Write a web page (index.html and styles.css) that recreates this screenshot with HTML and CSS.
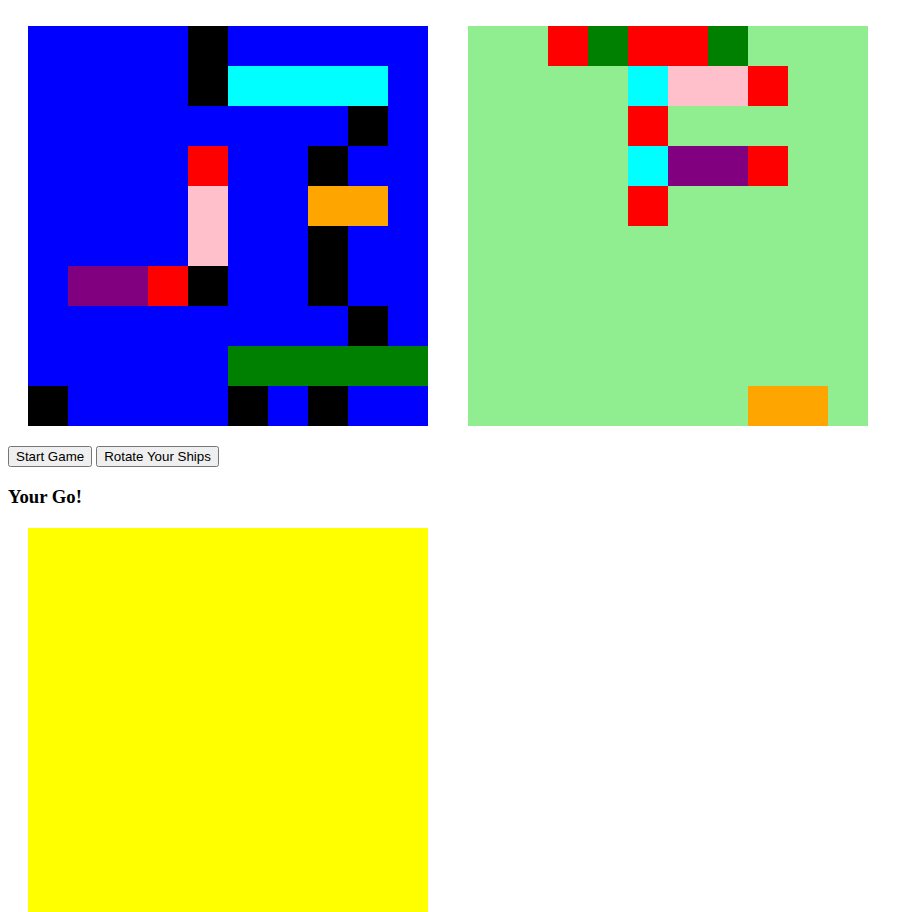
FILE: index.html
```html
<!DOCTYPE html>
<html>
<head>
<meta charset="utf-8">
<title>Battleships</title>
<link rel="stylesheet" href="styles.css">
</head>
<body>
<div class="boards">
  <div class="grid grid-user">
    <div></div><div></div><div></div><div></div><div class="k"></div><div></div><div></div><div></div><div></div><div></div>
    <div></div><div></div><div></div><div></div><div class="k"></div><div class="cy"></div><div class="cy"></div><div class="cy"></div><div class="cy"></div><div></div>
    <div></div><div></div><div></div><div></div><div></div><div></div><div></div><div></div><div class="k"></div><div></div>
    <div></div><div></div><div></div><div></div><div class="r"></div><div></div><div></div><div class="k"></div><div></div><div></div>
    <div></div><div></div><div></div><div></div><div class="p"></div><div></div><div></div><div class="o"></div><div class="o"></div><div></div>
    <div></div><div></div><div></div><div></div><div class="p"></div><div></div><div></div><div class="k"></div><div></div><div></div>
    <div></div><div class="pu"></div><div class="pu"></div><div class="r"></div><div class="k"></div><div></div><div></div><div class="k"></div><div></div><div></div>
    <div></div><div></div><div></div><div></div><div></div><div></div><div></div><div></div><div class="k"></div><div></div>
    <div></div><div></div><div></div><div></div><div></div><div class="g"></div><div class="g"></div><div class="g"></div><div class="g"></div><div class="g"></div>
    <div class="k"></div><div></div><div></div><div></div><div></div><div class="k"></div><div></div><div class="k"></div><div></div><div></div>
  </div>
  <div class="grid grid-computer">
    <div></div><div></div><div class="r"></div><div class="g"></div><div class="r"></div><div class="r"></div><div class="g"></div><div></div><div></div><div></div>
    <div></div><div></div><div></div><div></div><div class="cy"></div><div class="p"></div><div class="p"></div><div class="r"></div><div></div><div></div>
    <div></div><div></div><div></div><div></div><div class="r"></div><div></div><div></div><div></div><div></div><div></div>
    <div></div><div></div><div></div><div></div><div class="cy"></div><div class="pu"></div><div class="pu"></div><div class="r"></div><div></div><div></div>
    <div></div><div></div><div></div><div></div><div class="r"></div><div></div><div></div><div></div><div></div><div></div>
    <div></div><div></div><div></div><div></div><div></div><div></div><div></div><div></div><div></div><div></div>
    <div></div><div></div><div></div><div></div><div></div><div></div><div></div><div></div><div></div><div></div>
    <div></div><div></div><div></div><div></div><div></div><div></div><div></div><div></div><div></div><div></div>
    <div></div><div></div><div></div><div></div><div></div><div></div><div></div><div></div><div></div><div></div>
    <div></div><div></div><div></div><div></div><div></div><div></div><div></div><div class="o"></div><div class="o"></div><div></div>
  </div>
</div>
<div class="controls">
  <button class="btn">Start Game</button>
  <button class="btn">Rotate Your Ships</button>
</div>
<h3 class="turn">Your Go!</h3>
<div class="ships"></div>
</body>
</html>
```

FILE: styles.css
```css
body {
  margin: 8px;
  font-family: "Liberation Serif", serif;
}
.boards {
  display: flex;
}
.grid {
  width: 400px;
  height: 400px;
  margin: 18px 20px 20px 20px;
  display: grid;
  grid-template-columns: repeat(10, 40px);
  grid-template-rows: repeat(10, 40px);
}
.grid-user { background: #0000ff; }
.grid-computer { background: #90ee90; }
.k { background: #000000; }
.cy { background: #00ffff; }
.r { background: #ff0000; }
.p { background: #ffc0cb; }
.o { background: #ffa500; }
.pu { background: #800080; }
.g { background: #008000; }
.controls {
  display: flex;
  gap: 4px;
}
.btn {
  font-family: "Liberation Sans", Arial, sans-serif;
  font-size: 13.333px;
  margin: 0;
}
.turn {
  font-size: 18.72px;
  font-weight: bold;
  margin: 18.72px 0;
}
.ships {
  width: 400px;
  height: 400px;
  margin: 20px;
  background: #ffff00;
}
```
